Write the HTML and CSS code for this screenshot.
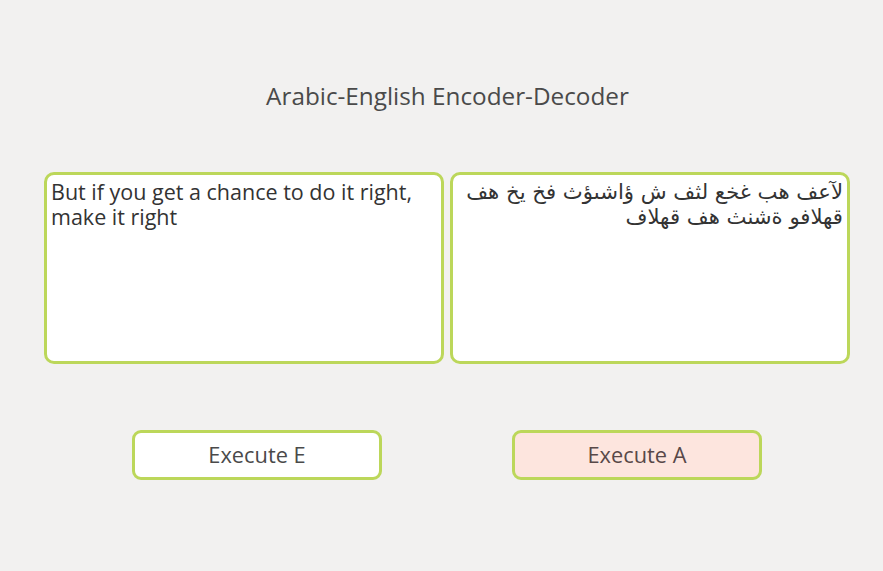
FILE: index.html
```html
<!DOCTYPE html>
<html lang="en">
<head>
<meta charset="utf-8">
<title>Arabic-English Encoder-Decoder</title>
<link rel="stylesheet" href="styles.css">
</head>
<body>
<main class="app">
  <h1 class="title">Arabic-English Encoder-Decoder</h1>
  <div class="panes">
    <textarea class="pane pane-en" readonly>But if you get a chance to do it right, make it right</textarea>
    <textarea class="pane pane-ar" dir="rtl" readonly>لآعف هب غخع لثف ش ؤاشىؤث فخ يخ هف قهلافو ةشنث هف قهلاف</textarea>
  </div>
  <div class="actions">
    <button class="btn btn-e" type="button">Execute E</button>
    <button class="btn btn-a" type="button">Execute A</button>
  </div>
</main>
</body>
</html>
```

FILE: styles.css
```css
html, body {
  margin: 0;
  padding: 0;
  background: #f2f1f0;
}

.app {
  width: 883px;
  height: 571px;
  font-family: "Open Sans", "DejaVu Sans", sans-serif;
  color: #454545;
}

.title {
  margin: 0;
  padding-top: 82px;
  height: 90px;
  text-align: center;
  font-weight: 400;
  font-size: 24.3px;
  line-height: 28px;
  color: #4a4a4a;
  padding-left: 12px;
}

.panes {
  display: grid;
  grid-template-columns: 400px 400px;
  column-gap: 6px;
  padding-left: 44px;
}

.pane {
  display: block;
  box-sizing: border-box;
  height: 192px;
  margin: 0;
  padding: 5px 4px;
  background: #ffffff;
  border: 3px solid #bcd75a;
  border-radius: 10px;
  resize: none;
  outline: none;
  overflow: hidden;
  font-family: "Open Sans", "DejaVu Sans", sans-serif;
  font-size: 21.5px;
  line-height: 24.5px;
  color: #333333;
}

.pane-ar {
  font-family: "DejaVu Sans", sans-serif;
  font-size: 21.2px;
  text-align: right;
}

.actions {
  display: flex;
  column-gap: 130px;
  padding-left: 132px;
  margin-top: 66px;
}

.btn {
  box-sizing: border-box;
  width: 250px;
  height: 50px;
  margin: 0;
  padding: 0 0 2px;
  border: 3px solid #bcd75a;
  border-radius: 9px;
  background: #ffffff;
  font-family: "Open Sans", "DejaVu Sans", sans-serif;
  font-size: 21.8px;
  color: #4a4a4a;
  cursor: pointer;
}

.btn-a {
  background: #fde5de;
  color: #584848;
}
```
